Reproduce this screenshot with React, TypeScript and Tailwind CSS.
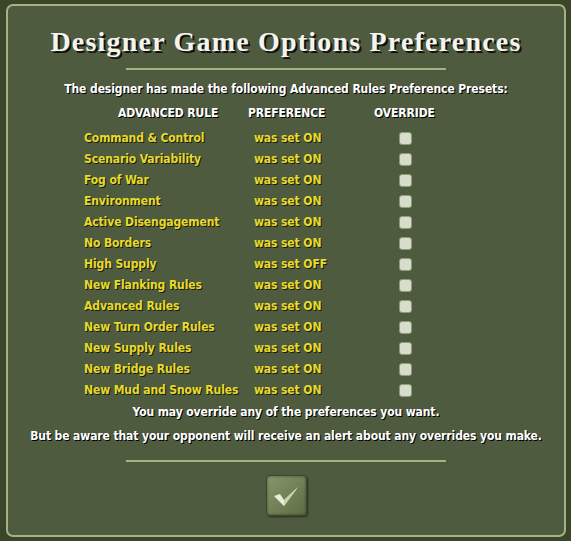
import React from "react";

type Rule = { name: string; value: "ON" | "OFF" };

const rules: Rule[] = [
  { name: "Command & Control", value: "ON" },
  { name: "Scenario Variability", value: "ON" },
  { name: "Fog of War", value: "ON" },
  { name: "Environment", value: "ON" },
  { name: "Active Disengagement", value: "ON" },
  { name: "No Borders", value: "ON" },
  { name: "High Supply", value: "OFF" },
  { name: "New Flanking Rules", value: "ON" },
  { name: "Advanced Rules", value: "ON" },
  { name: "New Turn Order Rules", value: "ON" },
  { name: "New Supply Rules", value: "ON" },
  { name: "New Bridge Rules", value: "ON" },
  { name: "New Mud and Snow Rules", value: "ON" },
];

const body = "font-['DejaVu_Sans_Condensed','DejaVu_Sans',sans-serif] font-bold text-[12px] tracking-[-0.1px]";
const shadow = "[text-shadow:1px_1px_0_#000]";

const CheckBox = () => (
  <div className="w-[13px] h-[13px] rounded-[3px] bg-[#d8dccb] border border-[#8e9a78]" />
);

export default function App() {
  return (
    <div className="w-[571px] h-[541px] bg-[#3b4527] pt-[4px] pl-[6px]">
      <div className={`w-[560px] h-[533px] rounded-[7px] border-2 border-[#a3b184] bg-[#4f5b3e] flex flex-col items-center ${body}`}>
        <h1 className="mt-[19px] text-[28px] leading-[34px] text-[#f4f4ee] font-['Liberation_Serif',serif] font-bold tracking-[1.2px] [text-shadow:2px_2px_0_#111]">
          Designer Game Options Preferences
        </h1>
        <div className="mt-[9px] w-[320px] h-[2px] bg-[#a3b184]" />
        <p className={`mt-[10px] leading-[18px] text-white ${shadow}`}>
          The designer has made the following Advanced Rules Preference Presets:
        </p>
        <div className="mt-[6px] w-full pl-[76px]">
          <div className={`grid grid-cols-[164px_126px_auto] leading-[18px] text-white ${shadow}`}>
            <div className="pl-[34px]">ADVANCED RULE</div>
            <div>PREFERENCE</div>
            <div>OVERRIDE</div>
          </div>
          <div className="mt-[6px]">
            {rules.map((r) => (
              <div key={r.name} className="grid grid-cols-[170px_145px_auto] items-center h-[21px] leading-[21px] text-[#e6da2c] [text-shadow:1px_1px_0_#1a1a0a]">
                <div className="whitespace-nowrap">{r.name}</div>
                <div>was set {r.value}</div>
                <div><CheckBox /></div>
              </div>
            ))}
          </div>
        </div>
        <p className={`mt-[2px] leading-[18px] text-white ${shadow}`}>
          You may override any of the preferences you want.
        </p>
        <p className={`mt-[6px] leading-[18px] text-white whitespace-nowrap ${shadow}`}>
          But be aware that your opponent will receive an alert about any overrides you make.
        </p>
        <div className="mt-[15px] w-[320px] h-[2px] bg-[#a3b184]" />
        <button className="mt-[13px] w-[41px] h-[41px] rounded-[4px] border border-[#3e4830] bg-gradient-to-br from-[#87966a] to-[#5f6d45] shadow-[inset_0_0_3px_rgba(0,0,0,0.45),1px_1px_2px_rgba(0,0,0,0.5)] flex items-center justify-center">
          <svg width="26" height="22" viewBox="0 0 26 22">
            <path d="M1 11 L7 9 L11 15 L25 2 L11 21 Z" fill="#e9efd6" />
            <path d="M11 15 L25 2 L11 21 Z" fill="#c8d2ae" />
          </svg>
        </button>
      </div>
    </div>
  );
}
